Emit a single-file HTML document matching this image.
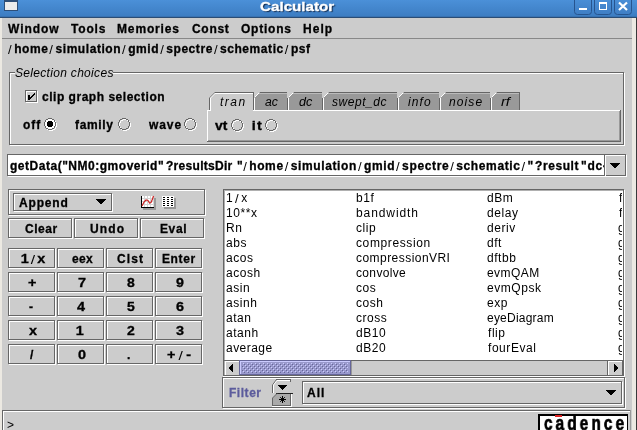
<!DOCTYPE html>
<html><head><meta charset="utf-8">
<style>
*{margin:0;padding:0;box-sizing:border-box}
html,body{width:637px;height:430px;overflow:hidden;background:#cccccc;position:relative;font-family:"Liberation Sans",sans-serif;font-size:12px;color:#000}
.a{position:absolute}
.t{position:absolute;white-space:nowrap;line-height:14px;will-change:transform}
.b{font-weight:bold}
.i{font-style:italic}
svg{position:absolute;left:0;top:0}
</style></head><body>
<svg width="637" height="430" viewBox="0 0 637 430" shape-rendering="crispEdges">
<defs><linearGradient id="tb" x1="0" y1="0" x2="0" y2="1"><stop offset="0" stop-color="#4b90d8"/><stop offset="1" stop-color="#3b7bc0"/></linearGradient><linearGradient id="wb" x1="0" y1="0" x2="0" y2="1"><stop offset="0" stop-color="#4a8fd7"/><stop offset="1" stop-color="#3f7ec4"/></linearGradient><pattern id="bumps" x="0" y="0" width="4" height="4" patternUnits="userSpaceOnUse"><rect x="0" y="0" width="4" height="4" fill="#9999cc"/><rect x="1" y="1" width="1" height="1" fill="#ccccff"/><rect x="3" y="3" width="1" height="1" fill="#ccccff"/><rect x="2" y="2" width="1" height="1" fill="#666699"/><rect x="0" y="0" width="1" height="1" fill="#666699"/></pattern></defs>
<rect x="0" y="0" width="637" height="18" fill="url(#tb)"/>
<rect x="0" y="16" width="637" height="1" fill="#3872b2"/>
<rect x="0" y="17" width="637" height="1" fill="#2a4c74"/>
<rect x="4" y="0" width="14" height="11" fill="#2e4f78"/>
<rect x="5" y="2" width="12" height="8" fill="#ececec"/>
<path d="M574.5 -1 V11.5 Q574.5 14.5 577.5 14.5 H588.5 Q591.5 14.5 591.5 11.5 V-1" fill="url(#wb)" stroke="#27558f" stroke-width="1" shape-rendering="geometricPrecision"/>
<path d="M594.5 -1 V11.5 Q594.5 14.5 597.5 14.5 H608.5 Q611.5 14.5 611.5 11.5 V-1" fill="url(#wb)" stroke="#27558f" stroke-width="1" shape-rendering="geometricPrecision"/>
<path d="M614.5 -1 V11.5 Q614.5 14.5 617.5 14.5 H628.5 Q631.5 14.5 631.5 11.5 V-1" fill="url(#wb)" stroke="#27558f" stroke-width="1" shape-rendering="geometricPrecision"/>
<rect x="579" y="8" width="8" height="2" fill="#ffffff"/>
<rect x="599" y="2" width="8" height="1" fill="#ffffff"/>
<rect x="599" y="9" width="8" height="1" fill="#ffffff"/>
<rect x="599" y="2" width="1" height="8" fill="#ffffff"/>
<rect x="606" y="2" width="1" height="8" fill="#ffffff"/>
<rect x="599" y="3" width="8" height="1" fill="#ffffff"/>
<path d="M619 2.5 L627 10 M627 2.5 L619 10" stroke="#ffffff" stroke-width="2.2" fill="none" shape-rendering="geometricPrecision"/>
<rect x="0" y="18" width="2" height="412" fill="#ece9e2"/>
<rect x="632" y="18" width="4" height="412" fill="#ece9e2"/>
<rect x="636" y="18" width="1" height="412" fill="#3a3a3a"/>
<rect x="2" y="38" width="630" height="1" fill="#888888"/>
<rect x="10" y="73" width="615" height="1" fill="#ffffff"/>
<rect x="10" y="145" width="615" height="1" fill="#ffffff"/>
<rect x="10" y="73" width="1" height="73" fill="#ffffff"/>
<rect x="624" y="73" width="1" height="73" fill="#ffffff"/>
<rect x="9" y="72" width="615" height="1" fill="#666666"/>
<rect x="9" y="144" width="615" height="1" fill="#666666"/>
<rect x="9" y="72" width="1" height="73" fill="#666666"/>
<rect x="623" y="72" width="1" height="73" fill="#666666"/>
<rect x="15" y="66" width="98" height="10" fill="#cccccc"/>
<rect x="26" y="91" width="12" height="1" fill="#ffffff"/>
<rect x="26" y="102" width="12" height="1" fill="#ffffff"/>
<rect x="26" y="91" width="1" height="12" fill="#ffffff"/>
<rect x="37" y="91" width="1" height="12" fill="#ffffff"/>
<rect x="25" y="90" width="12" height="1" fill="#666666"/>
<rect x="25" y="101" width="12" height="1" fill="#666666"/>
<rect x="25" y="90" width="1" height="12" fill="#666666"/>
<rect x="36" y="90" width="1" height="12" fill="#666666"/>
<rect x="28" y="95" width="2" height="5" fill="#000"/>
<rect x="30" y="97" width="1" height="2" fill="#000"/>
<rect x="31" y="96" width="1" height="2" fill="#000"/>
<rect x="32" y="95" width="1" height="2" fill="#000"/>
<rect x="33" y="94" width="1" height="2" fill="#000"/>
<rect x="34" y="93" width="1" height="2" fill="#000"/>
<rect x="48" y="119" width="4" height="1" fill="#ffffff"/>
<rect x="46" y="120" width="8" height="1" fill="#ffffff"/>
<rect x="46" y="121" width="8" height="1" fill="#ffffff"/>
<rect x="45" y="122" width="10" height="1" fill="#ffffff"/>
<rect x="45" y="123" width="10" height="1" fill="#ffffff"/>
<rect x="45" y="124" width="10" height="1" fill="#ffffff"/>
<rect x="45" y="125" width="10" height="1" fill="#ffffff"/>
<rect x="46" y="126" width="8" height="1" fill="#ffffff"/>
<rect x="46" y="127" width="8" height="1" fill="#ffffff"/>
<rect x="48" y="128" width="4" height="1" fill="#ffffff"/>
<rect x="49" y="119" width="4" height="1" fill="#ffffff"/>
<rect x="47" y="120" width="2" height="1" fill="#ffffff"/>
<rect x="53" y="120" width="2" height="1" fill="#ffffff"/>
<rect x="46" y="121" width="1" height="1" fill="#ffffff"/>
<rect x="55" y="121" width="1" height="1" fill="#ffffff"/>
<rect x="46" y="122" width="1" height="1" fill="#ffffff"/>
<rect x="55" y="122" width="1" height="1" fill="#ffffff"/>
<rect x="45" y="123" width="1" height="1" fill="#ffffff"/>
<rect x="56" y="123" width="1" height="1" fill="#ffffff"/>
<rect x="45" y="124" width="1" height="1" fill="#ffffff"/>
<rect x="56" y="124" width="1" height="1" fill="#ffffff"/>
<rect x="45" y="125" width="1" height="1" fill="#ffffff"/>
<rect x="56" y="125" width="1" height="1" fill="#ffffff"/>
<rect x="45" y="126" width="1" height="1" fill="#ffffff"/>
<rect x="56" y="126" width="1" height="1" fill="#ffffff"/>
<rect x="46" y="127" width="1" height="1" fill="#ffffff"/>
<rect x="55" y="127" width="1" height="1" fill="#ffffff"/>
<rect x="46" y="128" width="1" height="1" fill="#ffffff"/>
<rect x="55" y="128" width="1" height="1" fill="#ffffff"/>
<rect x="47" y="129" width="2" height="1" fill="#ffffff"/>
<rect x="53" y="129" width="2" height="1" fill="#ffffff"/>
<rect x="49" y="130" width="4" height="1" fill="#ffffff"/>
<rect x="48" y="118" width="4" height="1" fill="#666666"/>
<rect x="46" y="119" width="2" height="1" fill="#666666"/>
<rect x="52" y="119" width="2" height="1" fill="#666666"/>
<rect x="45" y="120" width="1" height="1" fill="#666666"/>
<rect x="54" y="120" width="1" height="1" fill="#666666"/>
<rect x="45" y="121" width="1" height="1" fill="#666666"/>
<rect x="54" y="121" width="1" height="1" fill="#666666"/>
<rect x="44" y="122" width="1" height="1" fill="#666666"/>
<rect x="55" y="122" width="1" height="1" fill="#666666"/>
<rect x="44" y="123" width="1" height="1" fill="#666666"/>
<rect x="55" y="123" width="1" height="1" fill="#666666"/>
<rect x="44" y="124" width="1" height="1" fill="#666666"/>
<rect x="55" y="124" width="1" height="1" fill="#666666"/>
<rect x="44" y="125" width="1" height="1" fill="#666666"/>
<rect x="55" y="125" width="1" height="1" fill="#666666"/>
<rect x="45" y="126" width="1" height="1" fill="#666666"/>
<rect x="54" y="126" width="1" height="1" fill="#666666"/>
<rect x="45" y="127" width="1" height="1" fill="#666666"/>
<rect x="54" y="127" width="1" height="1" fill="#666666"/>
<rect x="46" y="128" width="2" height="1" fill="#666666"/>
<rect x="52" y="128" width="2" height="1" fill="#666666"/>
<rect x="48" y="129" width="4" height="1" fill="#666666"/>
<rect x="48" y="121" width="4" height="1" fill="#000"/>
<rect x="47" y="122" width="6" height="4" fill="#000"/>
<rect x="48" y="126" width="4" height="1" fill="#000"/>
<rect x="123" y="119" width="4" height="1" fill="#ffffff"/>
<rect x="121" y="120" width="2" height="1" fill="#ffffff"/>
<rect x="127" y="120" width="2" height="1" fill="#ffffff"/>
<rect x="120" y="121" width="1" height="1" fill="#ffffff"/>
<rect x="129" y="121" width="1" height="1" fill="#ffffff"/>
<rect x="120" y="122" width="1" height="1" fill="#ffffff"/>
<rect x="129" y="122" width="1" height="1" fill="#ffffff"/>
<rect x="119" y="123" width="1" height="1" fill="#ffffff"/>
<rect x="130" y="123" width="1" height="1" fill="#ffffff"/>
<rect x="119" y="124" width="1" height="1" fill="#ffffff"/>
<rect x="130" y="124" width="1" height="1" fill="#ffffff"/>
<rect x="119" y="125" width="1" height="1" fill="#ffffff"/>
<rect x="130" y="125" width="1" height="1" fill="#ffffff"/>
<rect x="119" y="126" width="1" height="1" fill="#ffffff"/>
<rect x="130" y="126" width="1" height="1" fill="#ffffff"/>
<rect x="120" y="127" width="1" height="1" fill="#ffffff"/>
<rect x="129" y="127" width="1" height="1" fill="#ffffff"/>
<rect x="120" y="128" width="1" height="1" fill="#ffffff"/>
<rect x="129" y="128" width="1" height="1" fill="#ffffff"/>
<rect x="121" y="129" width="2" height="1" fill="#ffffff"/>
<rect x="127" y="129" width="2" height="1" fill="#ffffff"/>
<rect x="123" y="130" width="4" height="1" fill="#ffffff"/>
<rect x="122" y="118" width="4" height="1" fill="#666666"/>
<rect x="120" y="119" width="2" height="1" fill="#666666"/>
<rect x="126" y="119" width="2" height="1" fill="#666666"/>
<rect x="119" y="120" width="1" height="1" fill="#666666"/>
<rect x="128" y="120" width="1" height="1" fill="#666666"/>
<rect x="119" y="121" width="1" height="1" fill="#666666"/>
<rect x="128" y="121" width="1" height="1" fill="#666666"/>
<rect x="118" y="122" width="1" height="1" fill="#666666"/>
<rect x="129" y="122" width="1" height="1" fill="#666666"/>
<rect x="118" y="123" width="1" height="1" fill="#666666"/>
<rect x="129" y="123" width="1" height="1" fill="#666666"/>
<rect x="118" y="124" width="1" height="1" fill="#666666"/>
<rect x="129" y="124" width="1" height="1" fill="#666666"/>
<rect x="118" y="125" width="1" height="1" fill="#666666"/>
<rect x="129" y="125" width="1" height="1" fill="#666666"/>
<rect x="119" y="126" width="1" height="1" fill="#666666"/>
<rect x="128" y="126" width="1" height="1" fill="#666666"/>
<rect x="119" y="127" width="1" height="1" fill="#666666"/>
<rect x="128" y="127" width="1" height="1" fill="#666666"/>
<rect x="120" y="128" width="2" height="1" fill="#666666"/>
<rect x="126" y="128" width="2" height="1" fill="#666666"/>
<rect x="122" y="129" width="4" height="1" fill="#666666"/>
<rect x="189" y="119" width="4" height="1" fill="#ffffff"/>
<rect x="187" y="120" width="2" height="1" fill="#ffffff"/>
<rect x="193" y="120" width="2" height="1" fill="#ffffff"/>
<rect x="186" y="121" width="1" height="1" fill="#ffffff"/>
<rect x="195" y="121" width="1" height="1" fill="#ffffff"/>
<rect x="186" y="122" width="1" height="1" fill="#ffffff"/>
<rect x="195" y="122" width="1" height="1" fill="#ffffff"/>
<rect x="185" y="123" width="1" height="1" fill="#ffffff"/>
<rect x="196" y="123" width="1" height="1" fill="#ffffff"/>
<rect x="185" y="124" width="1" height="1" fill="#ffffff"/>
<rect x="196" y="124" width="1" height="1" fill="#ffffff"/>
<rect x="185" y="125" width="1" height="1" fill="#ffffff"/>
<rect x="196" y="125" width="1" height="1" fill="#ffffff"/>
<rect x="185" y="126" width="1" height="1" fill="#ffffff"/>
<rect x="196" y="126" width="1" height="1" fill="#ffffff"/>
<rect x="186" y="127" width="1" height="1" fill="#ffffff"/>
<rect x="195" y="127" width="1" height="1" fill="#ffffff"/>
<rect x="186" y="128" width="1" height="1" fill="#ffffff"/>
<rect x="195" y="128" width="1" height="1" fill="#ffffff"/>
<rect x="187" y="129" width="2" height="1" fill="#ffffff"/>
<rect x="193" y="129" width="2" height="1" fill="#ffffff"/>
<rect x="189" y="130" width="4" height="1" fill="#ffffff"/>
<rect x="188" y="118" width="4" height="1" fill="#666666"/>
<rect x="186" y="119" width="2" height="1" fill="#666666"/>
<rect x="192" y="119" width="2" height="1" fill="#666666"/>
<rect x="185" y="120" width="1" height="1" fill="#666666"/>
<rect x="194" y="120" width="1" height="1" fill="#666666"/>
<rect x="185" y="121" width="1" height="1" fill="#666666"/>
<rect x="194" y="121" width="1" height="1" fill="#666666"/>
<rect x="184" y="122" width="1" height="1" fill="#666666"/>
<rect x="195" y="122" width="1" height="1" fill="#666666"/>
<rect x="184" y="123" width="1" height="1" fill="#666666"/>
<rect x="195" y="123" width="1" height="1" fill="#666666"/>
<rect x="184" y="124" width="1" height="1" fill="#666666"/>
<rect x="195" y="124" width="1" height="1" fill="#666666"/>
<rect x="184" y="125" width="1" height="1" fill="#666666"/>
<rect x="195" y="125" width="1" height="1" fill="#666666"/>
<rect x="185" y="126" width="1" height="1" fill="#666666"/>
<rect x="194" y="126" width="1" height="1" fill="#666666"/>
<rect x="185" y="127" width="1" height="1" fill="#666666"/>
<rect x="194" y="127" width="1" height="1" fill="#666666"/>
<rect x="186" y="128" width="2" height="1" fill="#666666"/>
<rect x="192" y="128" width="2" height="1" fill="#666666"/>
<rect x="188" y="129" width="4" height="1" fill="#666666"/>
<rect x="207" y="110" width="414" height="31" fill="#cccccc"/>
<rect x="207" y="110" width="414" height="1" fill="#ffffff"/>
<rect x="207" y="110" width="1" height="32" fill="#ffffff"/>
<rect x="207" y="141" width="414" height="1" fill="#666666"/>
<rect x="208" y="140" width="412" height="1" fill="#999999"/>
<rect x="620" y="110" width="1" height="32" fill="#666666"/>
<rect x="619" y="111" width="1" height="30" fill="#999999"/>
<rect x="254" y="93" width="33" height="17" fill="#999999"/>
<polygon points="253,92 259,92 253,98" fill="#cccccc"/>
<rect x="259" y="92" width="29" height="1" fill="#666666"/>
<rect x="259" y="93" width="28" height="1" fill="#bbbbbb"/>
<rect x="287" y="92" width="1" height="18" fill="#666666"/>
<rect x="254" y="98" width="1" height="12" fill="#ffffff"/>
<path d="M254.5 97.5 L259.5 92.5" stroke="#ffffff" stroke-width="1" fill="none" shape-rendering="geometricPrecision"/>
<rect x="288" y="93" width="34" height="17" fill="#999999"/>
<polygon points="287,92 293,92 287,98" fill="#cccccc"/>
<rect x="293" y="92" width="30" height="1" fill="#666666"/>
<rect x="293" y="93" width="29" height="1" fill="#bbbbbb"/>
<rect x="322" y="92" width="1" height="18" fill="#666666"/>
<rect x="288" y="98" width="1" height="12" fill="#ffffff"/>
<path d="M288.5 97.5 L293.5 92.5" stroke="#ffffff" stroke-width="1" fill="none" shape-rendering="geometricPrecision"/>
<rect x="323" y="93" width="74" height="17" fill="#999999"/>
<polygon points="322,92 328,92 322,98" fill="#cccccc"/>
<rect x="328" y="92" width="70" height="1" fill="#666666"/>
<rect x="328" y="93" width="69" height="1" fill="#bbbbbb"/>
<rect x="397" y="92" width="1" height="18" fill="#666666"/>
<rect x="323" y="98" width="1" height="12" fill="#ffffff"/>
<path d="M323.5 97.5 L328.5 92.5" stroke="#ffffff" stroke-width="1" fill="none" shape-rendering="geometricPrecision"/>
<rect x="398" y="93" width="41" height="17" fill="#999999"/>
<polygon points="397,92 403,92 397,98" fill="#cccccc"/>
<rect x="403" y="92" width="37" height="1" fill="#666666"/>
<rect x="403" y="93" width="36" height="1" fill="#bbbbbb"/>
<rect x="439" y="92" width="1" height="18" fill="#666666"/>
<rect x="398" y="98" width="1" height="12" fill="#ffffff"/>
<path d="M398.5 97.5 L403.5 92.5" stroke="#ffffff" stroke-width="1" fill="none" shape-rendering="geometricPrecision"/>
<rect x="440" y="93" width="50" height="17" fill="#999999"/>
<polygon points="439,92 445,92 439,98" fill="#cccccc"/>
<rect x="445" y="92" width="46" height="1" fill="#666666"/>
<rect x="445" y="93" width="45" height="1" fill="#bbbbbb"/>
<rect x="490" y="92" width="1" height="18" fill="#666666"/>
<rect x="440" y="98" width="1" height="12" fill="#ffffff"/>
<path d="M440.5 97.5 L445.5 92.5" stroke="#ffffff" stroke-width="1" fill="none" shape-rendering="geometricPrecision"/>
<rect x="491" y="93" width="28" height="17" fill="#999999"/>
<polygon points="490,92 496,92 490,98" fill="#cccccc"/>
<rect x="496" y="92" width="24" height="1" fill="#666666"/>
<rect x="496" y="93" width="23" height="1" fill="#bbbbbb"/>
<rect x="519" y="92" width="1" height="18" fill="#666666"/>
<rect x="491" y="98" width="1" height="12" fill="#ffffff"/>
<path d="M491.5 97.5 L496.5 92.5" stroke="#ffffff" stroke-width="1" fill="none" shape-rendering="geometricPrecision"/>
<rect x="210" y="93" width="43" height="18" fill="#cccccc"/>
<polygon points="209,92 215,92 209,98" fill="#cccccc"/>
<rect x="215" y="92" width="39" height="1" fill="#666666"/>
<rect x="215" y="93" width="38" height="1" fill="#ffffff"/>
<rect x="209" y="98" width="1" height="13" fill="#666666"/>
<rect x="210" y="98" width="1" height="13" fill="#ffffff"/>
<rect x="253" y="92" width="1" height="18" fill="#666666"/>
<path d="M209.5 98 L215.5 92" stroke="#666666" stroke-width="1" fill="none" shape-rendering="geometricPrecision"/>
<path d="M210.5 98 L215.5 93" stroke="#ffffff" stroke-width="1" fill="none" shape-rendering="geometricPrecision"/>
<rect x="207" y="110" width="4" height="1" fill="#ffffff"/>
<rect x="236" y="120" width="4" height="1" fill="#ffffff"/>
<rect x="234" y="121" width="2" height="1" fill="#ffffff"/>
<rect x="240" y="121" width="2" height="1" fill="#ffffff"/>
<rect x="233" y="122" width="1" height="1" fill="#ffffff"/>
<rect x="242" y="122" width="1" height="1" fill="#ffffff"/>
<rect x="233" y="123" width="1" height="1" fill="#ffffff"/>
<rect x="242" y="123" width="1" height="1" fill="#ffffff"/>
<rect x="232" y="124" width="1" height="1" fill="#ffffff"/>
<rect x="243" y="124" width="1" height="1" fill="#ffffff"/>
<rect x="232" y="125" width="1" height="1" fill="#ffffff"/>
<rect x="243" y="125" width="1" height="1" fill="#ffffff"/>
<rect x="232" y="126" width="1" height="1" fill="#ffffff"/>
<rect x="243" y="126" width="1" height="1" fill="#ffffff"/>
<rect x="232" y="127" width="1" height="1" fill="#ffffff"/>
<rect x="243" y="127" width="1" height="1" fill="#ffffff"/>
<rect x="233" y="128" width="1" height="1" fill="#ffffff"/>
<rect x="242" y="128" width="1" height="1" fill="#ffffff"/>
<rect x="233" y="129" width="1" height="1" fill="#ffffff"/>
<rect x="242" y="129" width="1" height="1" fill="#ffffff"/>
<rect x="234" y="130" width="2" height="1" fill="#ffffff"/>
<rect x="240" y="130" width="2" height="1" fill="#ffffff"/>
<rect x="236" y="131" width="4" height="1" fill="#ffffff"/>
<rect x="235" y="119" width="4" height="1" fill="#666666"/>
<rect x="233" y="120" width="2" height="1" fill="#666666"/>
<rect x="239" y="120" width="2" height="1" fill="#666666"/>
<rect x="232" y="121" width="1" height="1" fill="#666666"/>
<rect x="241" y="121" width="1" height="1" fill="#666666"/>
<rect x="232" y="122" width="1" height="1" fill="#666666"/>
<rect x="241" y="122" width="1" height="1" fill="#666666"/>
<rect x="231" y="123" width="1" height="1" fill="#666666"/>
<rect x="242" y="123" width="1" height="1" fill="#666666"/>
<rect x="231" y="124" width="1" height="1" fill="#666666"/>
<rect x="242" y="124" width="1" height="1" fill="#666666"/>
<rect x="231" y="125" width="1" height="1" fill="#666666"/>
<rect x="242" y="125" width="1" height="1" fill="#666666"/>
<rect x="231" y="126" width="1" height="1" fill="#666666"/>
<rect x="242" y="126" width="1" height="1" fill="#666666"/>
<rect x="232" y="127" width="1" height="1" fill="#666666"/>
<rect x="241" y="127" width="1" height="1" fill="#666666"/>
<rect x="232" y="128" width="1" height="1" fill="#666666"/>
<rect x="241" y="128" width="1" height="1" fill="#666666"/>
<rect x="233" y="129" width="2" height="1" fill="#666666"/>
<rect x="239" y="129" width="2" height="1" fill="#666666"/>
<rect x="235" y="130" width="4" height="1" fill="#666666"/>
<rect x="270" y="120" width="4" height="1" fill="#ffffff"/>
<rect x="268" y="121" width="2" height="1" fill="#ffffff"/>
<rect x="274" y="121" width="2" height="1" fill="#ffffff"/>
<rect x="267" y="122" width="1" height="1" fill="#ffffff"/>
<rect x="276" y="122" width="1" height="1" fill="#ffffff"/>
<rect x="267" y="123" width="1" height="1" fill="#ffffff"/>
<rect x="276" y="123" width="1" height="1" fill="#ffffff"/>
<rect x="266" y="124" width="1" height="1" fill="#ffffff"/>
<rect x="277" y="124" width="1" height="1" fill="#ffffff"/>
<rect x="266" y="125" width="1" height="1" fill="#ffffff"/>
<rect x="277" y="125" width="1" height="1" fill="#ffffff"/>
<rect x="266" y="126" width="1" height="1" fill="#ffffff"/>
<rect x="277" y="126" width="1" height="1" fill="#ffffff"/>
<rect x="266" y="127" width="1" height="1" fill="#ffffff"/>
<rect x="277" y="127" width="1" height="1" fill="#ffffff"/>
<rect x="267" y="128" width="1" height="1" fill="#ffffff"/>
<rect x="276" y="128" width="1" height="1" fill="#ffffff"/>
<rect x="267" y="129" width="1" height="1" fill="#ffffff"/>
<rect x="276" y="129" width="1" height="1" fill="#ffffff"/>
<rect x="268" y="130" width="2" height="1" fill="#ffffff"/>
<rect x="274" y="130" width="2" height="1" fill="#ffffff"/>
<rect x="270" y="131" width="4" height="1" fill="#ffffff"/>
<rect x="269" y="119" width="4" height="1" fill="#666666"/>
<rect x="267" y="120" width="2" height="1" fill="#666666"/>
<rect x="273" y="120" width="2" height="1" fill="#666666"/>
<rect x="266" y="121" width="1" height="1" fill="#666666"/>
<rect x="275" y="121" width="1" height="1" fill="#666666"/>
<rect x="266" y="122" width="1" height="1" fill="#666666"/>
<rect x="275" y="122" width="1" height="1" fill="#666666"/>
<rect x="265" y="123" width="1" height="1" fill="#666666"/>
<rect x="276" y="123" width="1" height="1" fill="#666666"/>
<rect x="265" y="124" width="1" height="1" fill="#666666"/>
<rect x="276" y="124" width="1" height="1" fill="#666666"/>
<rect x="265" y="125" width="1" height="1" fill="#666666"/>
<rect x="276" y="125" width="1" height="1" fill="#666666"/>
<rect x="265" y="126" width="1" height="1" fill="#666666"/>
<rect x="276" y="126" width="1" height="1" fill="#666666"/>
<rect x="266" y="127" width="1" height="1" fill="#666666"/>
<rect x="275" y="127" width="1" height="1" fill="#666666"/>
<rect x="266" y="128" width="1" height="1" fill="#666666"/>
<rect x="275" y="128" width="1" height="1" fill="#666666"/>
<rect x="267" y="129" width="2" height="1" fill="#666666"/>
<rect x="273" y="129" width="2" height="1" fill="#666666"/>
<rect x="269" y="130" width="4" height="1" fill="#666666"/>
<rect x="8" y="155" width="619" height="1" fill="#ffffff"/>
<rect x="8" y="176" width="619" height="1" fill="#ffffff"/>
<rect x="8" y="155" width="1" height="22" fill="#ffffff"/>
<rect x="626" y="155" width="1" height="22" fill="#ffffff"/>
<rect x="7" y="154" width="619" height="1" fill="#666666"/>
<rect x="7" y="175" width="619" height="1" fill="#666666"/>
<rect x="7" y="154" width="1" height="22" fill="#666666"/>
<rect x="625" y="154" width="1" height="22" fill="#666666"/>
<rect x="8" y="155" width="596" height="20" fill="#ffffff"/>
<rect x="604" y="155" width="1" height="20" fill="#666666"/>
<rect x="605" y="155" width="1" height="21" fill="#ffffff"/>
<rect x="606" y="155" width="19" height="1" fill="#ffffff"/>
<polygon points="609,163 620,163 614.5,168.5" fill="#000"/>
<rect x="9" y="190" width="197" height="1" fill="#ffffff"/>
<rect x="9" y="215" width="197" height="1" fill="#ffffff"/>
<rect x="9" y="190" width="1" height="26" fill="#ffffff"/>
<rect x="205" y="190" width="1" height="26" fill="#ffffff"/>
<rect x="8" y="189" width="197" height="1" fill="#666666"/>
<rect x="8" y="214" width="197" height="1" fill="#666666"/>
<rect x="8" y="189" width="1" height="26" fill="#666666"/>
<rect x="204" y="189" width="1" height="26" fill="#666666"/>
<rect x="14" y="194" width="99" height="1" fill="#ffffff"/>
<rect x="14" y="211" width="99" height="1" fill="#ffffff"/>
<rect x="14" y="194" width="1" height="18" fill="#ffffff"/>
<rect x="112" y="194" width="1" height="18" fill="#ffffff"/>
<rect x="13" y="193" width="99" height="1" fill="#666666"/>
<rect x="13" y="210" width="99" height="1" fill="#666666"/>
<rect x="13" y="193" width="1" height="18" fill="#666666"/>
<rect x="111" y="193" width="1" height="18" fill="#666666"/>
<polygon points="96,199 106,199 101,204.5" fill="#000"/>
<rect x="143" y="198" width="13" height="12" fill="#999999"/>
<rect x="141" y="196" width="13" height="12" fill="#d4d4d4"/>
<rect x="142" y="196" width="2" height="2" fill="#ffffff"/>
<rect x="142" y="199" width="2" height="2" fill="#ffffff"/>
<rect x="142" y="202" width="2" height="2" fill="#ffffff"/>
<rect x="142" y="205" width="2" height="2" fill="#ffffff"/>
<rect x="145" y="196" width="2" height="2" fill="#ffffff"/>
<rect x="145" y="199" width="2" height="2" fill="#ffffff"/>
<rect x="145" y="202" width="2" height="2" fill="#ffffff"/>
<rect x="145" y="205" width="2" height="2" fill="#ffffff"/>
<rect x="148" y="196" width="2" height="2" fill="#ffffff"/>
<rect x="148" y="199" width="2" height="2" fill="#ffffff"/>
<rect x="148" y="202" width="2" height="2" fill="#ffffff"/>
<rect x="148" y="205" width="2" height="2" fill="#ffffff"/>
<rect x="151" y="196" width="2" height="2" fill="#ffffff"/>
<rect x="151" y="199" width="2" height="2" fill="#ffffff"/>
<rect x="151" y="202" width="2" height="2" fill="#ffffff"/>
<rect x="151" y="205" width="2" height="2" fill="#ffffff"/>
<rect x="141" y="196" width="1" height="12" fill="#000"/>
<rect x="141" y="207" width="13" height="1" fill="#000"/>
<path d="M142 206 L144 202 L146 200 L148 200.5 L149.5 203 L151 202.5 L152.5 199 L153.5 196" stroke="#cc2020" stroke-width="1.2" fill="none" shape-rendering="geometricPrecision"/>
<rect x="164" y="198" width="12" height="11" fill="#999999"/>
<rect x="162" y="196" width="12" height="11" fill="#ffffff"/>
<rect x="163" y="197" width="2" height="1" fill="#000"/>
<rect x="163" y="199" width="2" height="1" fill="#000"/>
<rect x="163" y="201" width="2" height="1" fill="#000"/>
<rect x="163" y="203" width="2" height="1" fill="#000"/>
<rect x="163" y="205" width="2" height="1" fill="#000"/>
<rect x="167" y="197" width="2" height="1" fill="#000"/>
<rect x="167" y="199" width="2" height="1" fill="#000"/>
<rect x="167" y="201" width="2" height="1" fill="#000"/>
<rect x="167" y="203" width="2" height="1" fill="#000"/>
<rect x="167" y="205" width="2" height="1" fill="#000"/>
<rect x="171" y="197" width="2" height="1" fill="#000"/>
<rect x="171" y="199" width="2" height="1" fill="#000"/>
<rect x="171" y="201" width="2" height="1" fill="#000"/>
<rect x="171" y="203" width="2" height="1" fill="#000"/>
<rect x="171" y="205" width="2" height="1" fill="#000"/>
<rect x="9" y="219" width="64" height="1" fill="#ffffff"/>
<rect x="9" y="238" width="64" height="1" fill="#ffffff"/>
<rect x="9" y="219" width="1" height="20" fill="#ffffff"/>
<rect x="72" y="219" width="1" height="20" fill="#ffffff"/>
<rect x="8" y="218" width="64" height="1" fill="#666666"/>
<rect x="8" y="237" width="64" height="1" fill="#666666"/>
<rect x="8" y="218" width="1" height="20" fill="#666666"/>
<rect x="71" y="218" width="1" height="20" fill="#666666"/>
<rect x="75" y="219" width="64" height="1" fill="#ffffff"/>
<rect x="75" y="238" width="64" height="1" fill="#ffffff"/>
<rect x="75" y="219" width="1" height="20" fill="#ffffff"/>
<rect x="138" y="219" width="1" height="20" fill="#ffffff"/>
<rect x="74" y="218" width="64" height="1" fill="#666666"/>
<rect x="74" y="237" width="64" height="1" fill="#666666"/>
<rect x="74" y="218" width="1" height="20" fill="#666666"/>
<rect x="137" y="218" width="1" height="20" fill="#666666"/>
<rect x="141" y="219" width="64" height="1" fill="#ffffff"/>
<rect x="141" y="238" width="64" height="1" fill="#ffffff"/>
<rect x="141" y="219" width="1" height="20" fill="#ffffff"/>
<rect x="204" y="219" width="1" height="20" fill="#ffffff"/>
<rect x="140" y="218" width="64" height="1" fill="#666666"/>
<rect x="140" y="237" width="64" height="1" fill="#666666"/>
<rect x="140" y="218" width="1" height="20" fill="#666666"/>
<rect x="203" y="218" width="1" height="20" fill="#666666"/>
<rect x="9" y="249" width="47" height="1" fill="#ffffff"/>
<rect x="9" y="268" width="47" height="1" fill="#ffffff"/>
<rect x="9" y="249" width="1" height="20" fill="#ffffff"/>
<rect x="55" y="249" width="1" height="20" fill="#ffffff"/>
<rect x="8" y="248" width="47" height="1" fill="#666666"/>
<rect x="8" y="267" width="47" height="1" fill="#666666"/>
<rect x="8" y="248" width="1" height="20" fill="#666666"/>
<rect x="54" y="248" width="1" height="20" fill="#666666"/>
<rect x="58" y="249" width="47" height="1" fill="#ffffff"/>
<rect x="58" y="268" width="47" height="1" fill="#ffffff"/>
<rect x="58" y="249" width="1" height="20" fill="#ffffff"/>
<rect x="104" y="249" width="1" height="20" fill="#ffffff"/>
<rect x="57" y="248" width="47" height="1" fill="#666666"/>
<rect x="57" y="267" width="47" height="1" fill="#666666"/>
<rect x="57" y="248" width="1" height="20" fill="#666666"/>
<rect x="103" y="248" width="1" height="20" fill="#666666"/>
<rect x="107" y="249" width="47" height="1" fill="#ffffff"/>
<rect x="107" y="268" width="47" height="1" fill="#ffffff"/>
<rect x="107" y="249" width="1" height="20" fill="#ffffff"/>
<rect x="153" y="249" width="1" height="20" fill="#ffffff"/>
<rect x="106" y="248" width="47" height="1" fill="#666666"/>
<rect x="106" y="267" width="47" height="1" fill="#666666"/>
<rect x="106" y="248" width="1" height="20" fill="#666666"/>
<rect x="152" y="248" width="1" height="20" fill="#666666"/>
<rect x="156" y="249" width="47" height="1" fill="#ffffff"/>
<rect x="156" y="268" width="47" height="1" fill="#ffffff"/>
<rect x="156" y="249" width="1" height="20" fill="#ffffff"/>
<rect x="202" y="249" width="1" height="20" fill="#ffffff"/>
<rect x="155" y="248" width="47" height="1" fill="#666666"/>
<rect x="155" y="267" width="47" height="1" fill="#666666"/>
<rect x="155" y="248" width="1" height="20" fill="#666666"/>
<rect x="201" y="248" width="1" height="20" fill="#666666"/>
<rect x="9" y="273" width="47" height="1" fill="#ffffff"/>
<rect x="9" y="292" width="47" height="1" fill="#ffffff"/>
<rect x="9" y="273" width="1" height="20" fill="#ffffff"/>
<rect x="55" y="273" width="1" height="20" fill="#ffffff"/>
<rect x="8" y="272" width="47" height="1" fill="#666666"/>
<rect x="8" y="291" width="47" height="1" fill="#666666"/>
<rect x="8" y="272" width="1" height="20" fill="#666666"/>
<rect x="54" y="272" width="1" height="20" fill="#666666"/>
<rect x="58" y="273" width="47" height="1" fill="#ffffff"/>
<rect x="58" y="292" width="47" height="1" fill="#ffffff"/>
<rect x="58" y="273" width="1" height="20" fill="#ffffff"/>
<rect x="104" y="273" width="1" height="20" fill="#ffffff"/>
<rect x="57" y="272" width="47" height="1" fill="#666666"/>
<rect x="57" y="291" width="47" height="1" fill="#666666"/>
<rect x="57" y="272" width="1" height="20" fill="#666666"/>
<rect x="103" y="272" width="1" height="20" fill="#666666"/>
<rect x="107" y="273" width="47" height="1" fill="#ffffff"/>
<rect x="107" y="292" width="47" height="1" fill="#ffffff"/>
<rect x="107" y="273" width="1" height="20" fill="#ffffff"/>
<rect x="153" y="273" width="1" height="20" fill="#ffffff"/>
<rect x="106" y="272" width="47" height="1" fill="#666666"/>
<rect x="106" y="291" width="47" height="1" fill="#666666"/>
<rect x="106" y="272" width="1" height="20" fill="#666666"/>
<rect x="152" y="272" width="1" height="20" fill="#666666"/>
<rect x="156" y="273" width="47" height="1" fill="#ffffff"/>
<rect x="156" y="292" width="47" height="1" fill="#ffffff"/>
<rect x="156" y="273" width="1" height="20" fill="#ffffff"/>
<rect x="202" y="273" width="1" height="20" fill="#ffffff"/>
<rect x="155" y="272" width="47" height="1" fill="#666666"/>
<rect x="155" y="291" width="47" height="1" fill="#666666"/>
<rect x="155" y="272" width="1" height="20" fill="#666666"/>
<rect x="201" y="272" width="1" height="20" fill="#666666"/>
<rect x="9" y="297" width="47" height="1" fill="#ffffff"/>
<rect x="9" y="316" width="47" height="1" fill="#ffffff"/>
<rect x="9" y="297" width="1" height="20" fill="#ffffff"/>
<rect x="55" y="297" width="1" height="20" fill="#ffffff"/>
<rect x="8" y="296" width="47" height="1" fill="#666666"/>
<rect x="8" y="315" width="47" height="1" fill="#666666"/>
<rect x="8" y="296" width="1" height="20" fill="#666666"/>
<rect x="54" y="296" width="1" height="20" fill="#666666"/>
<rect x="58" y="297" width="47" height="1" fill="#ffffff"/>
<rect x="58" y="316" width="47" height="1" fill="#ffffff"/>
<rect x="58" y="297" width="1" height="20" fill="#ffffff"/>
<rect x="104" y="297" width="1" height="20" fill="#ffffff"/>
<rect x="57" y="296" width="47" height="1" fill="#666666"/>
<rect x="57" y="315" width="47" height="1" fill="#666666"/>
<rect x="57" y="296" width="1" height="20" fill="#666666"/>
<rect x="103" y="296" width="1" height="20" fill="#666666"/>
<rect x="107" y="297" width="47" height="1" fill="#ffffff"/>
<rect x="107" y="316" width="47" height="1" fill="#ffffff"/>
<rect x="107" y="297" width="1" height="20" fill="#ffffff"/>
<rect x="153" y="297" width="1" height="20" fill="#ffffff"/>
<rect x="106" y="296" width="47" height="1" fill="#666666"/>
<rect x="106" y="315" width="47" height="1" fill="#666666"/>
<rect x="106" y="296" width="1" height="20" fill="#666666"/>
<rect x="152" y="296" width="1" height="20" fill="#666666"/>
<rect x="156" y="297" width="47" height="1" fill="#ffffff"/>
<rect x="156" y="316" width="47" height="1" fill="#ffffff"/>
<rect x="156" y="297" width="1" height="20" fill="#ffffff"/>
<rect x="202" y="297" width="1" height="20" fill="#ffffff"/>
<rect x="155" y="296" width="47" height="1" fill="#666666"/>
<rect x="155" y="315" width="47" height="1" fill="#666666"/>
<rect x="155" y="296" width="1" height="20" fill="#666666"/>
<rect x="201" y="296" width="1" height="20" fill="#666666"/>
<rect x="9" y="321" width="47" height="1" fill="#ffffff"/>
<rect x="9" y="340" width="47" height="1" fill="#ffffff"/>
<rect x="9" y="321" width="1" height="20" fill="#ffffff"/>
<rect x="55" y="321" width="1" height="20" fill="#ffffff"/>
<rect x="8" y="320" width="47" height="1" fill="#666666"/>
<rect x="8" y="339" width="47" height="1" fill="#666666"/>
<rect x="8" y="320" width="1" height="20" fill="#666666"/>
<rect x="54" y="320" width="1" height="20" fill="#666666"/>
<rect x="58" y="321" width="47" height="1" fill="#ffffff"/>
<rect x="58" y="340" width="47" height="1" fill="#ffffff"/>
<rect x="58" y="321" width="1" height="20" fill="#ffffff"/>
<rect x="104" y="321" width="1" height="20" fill="#ffffff"/>
<rect x="57" y="320" width="47" height="1" fill="#666666"/>
<rect x="57" y="339" width="47" height="1" fill="#666666"/>
<rect x="57" y="320" width="1" height="20" fill="#666666"/>
<rect x="103" y="320" width="1" height="20" fill="#666666"/>
<rect x="107" y="321" width="47" height="1" fill="#ffffff"/>
<rect x="107" y="340" width="47" height="1" fill="#ffffff"/>
<rect x="107" y="321" width="1" height="20" fill="#ffffff"/>
<rect x="153" y="321" width="1" height="20" fill="#ffffff"/>
<rect x="106" y="320" width="47" height="1" fill="#666666"/>
<rect x="106" y="339" width="47" height="1" fill="#666666"/>
<rect x="106" y="320" width="1" height="20" fill="#666666"/>
<rect x="152" y="320" width="1" height="20" fill="#666666"/>
<rect x="156" y="321" width="47" height="1" fill="#ffffff"/>
<rect x="156" y="340" width="47" height="1" fill="#ffffff"/>
<rect x="156" y="321" width="1" height="20" fill="#ffffff"/>
<rect x="202" y="321" width="1" height="20" fill="#ffffff"/>
<rect x="155" y="320" width="47" height="1" fill="#666666"/>
<rect x="155" y="339" width="47" height="1" fill="#666666"/>
<rect x="155" y="320" width="1" height="20" fill="#666666"/>
<rect x="201" y="320" width="1" height="20" fill="#666666"/>
<rect x="9" y="345" width="47" height="1" fill="#ffffff"/>
<rect x="9" y="364" width="47" height="1" fill="#ffffff"/>
<rect x="9" y="345" width="1" height="20" fill="#ffffff"/>
<rect x="55" y="345" width="1" height="20" fill="#ffffff"/>
<rect x="8" y="344" width="47" height="1" fill="#666666"/>
<rect x="8" y="363" width="47" height="1" fill="#666666"/>
<rect x="8" y="344" width="1" height="20" fill="#666666"/>
<rect x="54" y="344" width="1" height="20" fill="#666666"/>
<rect x="58" y="345" width="47" height="1" fill="#ffffff"/>
<rect x="58" y="364" width="47" height="1" fill="#ffffff"/>
<rect x="58" y="345" width="1" height="20" fill="#ffffff"/>
<rect x="104" y="345" width="1" height="20" fill="#ffffff"/>
<rect x="57" y="344" width="47" height="1" fill="#666666"/>
<rect x="57" y="363" width="47" height="1" fill="#666666"/>
<rect x="57" y="344" width="1" height="20" fill="#666666"/>
<rect x="103" y="344" width="1" height="20" fill="#666666"/>
<rect x="107" y="345" width="47" height="1" fill="#ffffff"/>
<rect x="107" y="364" width="47" height="1" fill="#ffffff"/>
<rect x="107" y="345" width="1" height="20" fill="#ffffff"/>
<rect x="153" y="345" width="1" height="20" fill="#ffffff"/>
<rect x="106" y="344" width="47" height="1" fill="#666666"/>
<rect x="106" y="363" width="47" height="1" fill="#666666"/>
<rect x="106" y="344" width="1" height="20" fill="#666666"/>
<rect x="152" y="344" width="1" height="20" fill="#666666"/>
<rect x="156" y="345" width="47" height="1" fill="#ffffff"/>
<rect x="156" y="364" width="47" height="1" fill="#ffffff"/>
<rect x="156" y="345" width="1" height="20" fill="#ffffff"/>
<rect x="202" y="345" width="1" height="20" fill="#ffffff"/>
<rect x="155" y="344" width="47" height="1" fill="#666666"/>
<rect x="155" y="363" width="47" height="1" fill="#666666"/>
<rect x="155" y="344" width="1" height="20" fill="#666666"/>
<rect x="201" y="344" width="1" height="20" fill="#666666"/>
<rect x="224" y="190" width="399" height="170" fill="#ffffff"/>
<rect x="223" y="189" width="401" height="1" fill="#666666"/>
<rect x="223" y="189" width="1" height="187" fill="#666666"/>
<rect x="224" y="190" width="399" height="1" fill="#b0b0b0"/>
<rect x="224" y="190" width="1" height="185" fill="#b0b0b0"/>
<rect x="623" y="189" width="1" height="187" fill="#666666"/>
<rect x="624" y="190" width="1" height="187" fill="#ffffff"/>
<rect x="223" y="376" width="402" height="1" fill="#ffffff"/>
<rect x="224" y="360" width="399" height="1" fill="#666666"/>
<rect x="224" y="375" width="399" height="1" fill="#666666"/>
<rect x="225" y="361" width="397" height="14" fill="#cccccc"/>
<rect x="225" y="361" width="14" height="1" fill="#ffffff"/>
<rect x="225" y="361" width="1" height="14" fill="#ffffff"/>
<polygon points="228.5,368 233,363.5 233,372.5" fill="#000"/>
<rect x="239" y="360" width="112" height="15" fill="#666699"/>
<rect x="240" y="361" width="110" height="13" fill="#ccccff"/>
<rect x="241" y="362" width="109" height="12" fill="#9999cc"/>
<rect x="242" y="363" width="106" height="10" fill="url(#bumps)"/>
<rect x="351" y="361" width="1" height="14" fill="#999999"/>
<rect x="607" y="361" width="1" height="14" fill="#666666"/>
<rect x="608" y="361" width="15" height="1" fill="#ffffff"/>
<rect x="608" y="361" width="1" height="14" fill="#ffffff"/>
<rect x="622" y="361" width="1" height="15" fill="#666666"/>
<polygon points="614,363.5 618.5,368 614,372.5" fill="#000"/>
<rect x="223" y="378" width="403" height="1" fill="#ffffff"/>
<rect x="223" y="408" width="403" height="1" fill="#ffffff"/>
<rect x="223" y="378" width="1" height="31" fill="#ffffff"/>
<rect x="625" y="378" width="1" height="31" fill="#ffffff"/>
<rect x="222" y="377" width="403" height="1" fill="#666666"/>
<rect x="222" y="407" width="403" height="1" fill="#666666"/>
<rect x="222" y="377" width="1" height="31" fill="#666666"/>
<rect x="624" y="377" width="1" height="31" fill="#666666"/>
<rect x="303" y="382" width="320" height="1" fill="#ffffff"/>
<rect x="303" y="404" width="320" height="1" fill="#ffffff"/>
<rect x="303" y="382" width="1" height="23" fill="#ffffff"/>
<rect x="622" y="382" width="1" height="23" fill="#ffffff"/>
<rect x="302" y="381" width="320" height="1" fill="#666666"/>
<rect x="302" y="403" width="320" height="1" fill="#666666"/>
<rect x="302" y="381" width="1" height="23" fill="#666666"/>
<rect x="621" y="381" width="1" height="23" fill="#666666"/>
<polygon points="605,390 616,390 610.5,395.5" fill="#000"/>
<rect x="276" y="379" width="15" height="1" fill="#666666"/>
<rect x="290" y="379" width="1" height="3" fill="#666666"/>
<rect x="277" y="380" width="13" height="1" fill="#ffffff"/>
<path d="M272.5 385 L276.5 379.5" stroke="#666666" stroke-width="1" fill="none" shape-rendering="geometricPrecision"/>
<path d="M273.5 385 L277 380.5" stroke="#ffffff" stroke-width="1" fill="none" shape-rendering="geometricPrecision"/>
<rect x="272" y="385" width="1" height="9" fill="#666666"/>
<rect x="273" y="385" width="1" height="8" fill="#ffffff"/>
<polygon points="277.5,385 287.5,385 282.5,390.5" fill="#000"/>
<rect x="273" y="394" width="17" height="11" fill="#aaaaaa"/>
<polygon points="272,393 277,393 272,398" fill="#cccccc"/>
<rect x="276" y="393" width="17" height="1" fill="#222222"/>
<path d="M272.5 398 L277 393.5" stroke="#666666" stroke-width="1" fill="none" shape-rendering="geometricPrecision"/>
<rect x="272" y="398" width="1" height="8" fill="#666666"/>
<rect x="272" y="405" width="19" height="1" fill="#666666"/>
<rect x="290" y="394" width="1" height="12" fill="#666666"/>
<rect x="291" y="394" width="1" height="13" fill="#ffffff"/>
<rect x="272" y="406" width="20" height="1" fill="#ffffff"/>
<rect x="281" y="398" width="3" height="3" fill="#000"/>
<rect x="279" y="399" width="7" height="1" fill="#000"/>
<rect x="282" y="396" width="1" height="7" fill="#000"/>
<rect x="280" y="397" width="1" height="1" fill="#222"/>
<rect x="284" y="397" width="1" height="1" fill="#222"/>
<rect x="280" y="401" width="1" height="1" fill="#222"/>
<rect x="284" y="401" width="1" height="1" fill="#222"/>
<rect x="2" y="410" width="629" height="1" fill="#666666"/>
<rect x="2" y="410" width="1" height="20" fill="#666666"/>
<rect x="3" y="411" width="628" height="1" fill="#ffffff"/>
<rect x="3" y="411" width="1" height="19" fill="#ffffff"/>
<rect x="630" y="410" width="1" height="20" fill="#999999"/>
<rect x="538" y="414" width="90" height="16" fill="#000"/>
<rect x="540" y="416" width="87" height="14" fill="#ffffff"/>
</svg>
<div class="t" style="left:259.90px;top:0px;font-weight:bold;-webkit-text-stroke:0.3px currentColor;font-size:13px;color:#fff;text-shadow:1px 1px 1px #10284a;transform:scaleX(1.1683);transform-origin:0px 0;">Calculator</div>
<div class="t" style="left:7.80px;top:22px;font-weight:bold;-webkit-text-stroke:0.3px currentColor;letter-spacing:0.920px;">Window</div>
<div class="t" style="left:71.20px;top:22px;font-weight:bold;-webkit-text-stroke:0.3px currentColor;letter-spacing:0.825px;">Tools</div>
<div class="t" style="left:117.00px;top:22px;font-weight:bold;-webkit-text-stroke:0.3px currentColor;letter-spacing:0.857px;">Memories</div>
<div class="t" style="left:191.60px;top:22px;font-weight:bold;-webkit-text-stroke:0.3px currentColor;letter-spacing:0.700px;">Const</div>
<div class="t" style="left:240.50px;top:22px;font-weight:bold;-webkit-text-stroke:0.3px currentColor;letter-spacing:0.767px;">Options</div>
<div class="t" style="left:302.50px;top:22px;font-weight:bold;-webkit-text-stroke:0.3px currentColor;letter-spacing:1.033px;">Help</div>
<div class="t" style="left:6.70px;top:42px;font-weight:bold;-webkit-text-stroke:0.3px currentColor;letter-spacing:0.560px;"><span style="margin:0 1.98px 0 0.99px;font-weight:normal;font-size:13px;line-height:0;position:relative;top:0.5px;-webkit-text-stroke:0">/</span>home<span style="margin:0 1.98px 0 0.99px;font-weight:normal;font-size:13px;line-height:0;position:relative;top:0.5px;-webkit-text-stroke:0">/</span>simulation<span style="margin:0 1.98px 0 0.99px;font-weight:normal;font-size:13px;line-height:0;position:relative;top:0.5px;-webkit-text-stroke:0">/</span>gmid<span style="margin:0 1.98px 0 0.99px;font-weight:normal;font-size:13px;line-height:0;position:relative;top:0.5px;-webkit-text-stroke:0">/</span>spectre<span style="margin:0 1.98px 0 0.99px;font-weight:normal;font-size:13px;line-height:0;position:relative;top:0.5px;-webkit-text-stroke:0">/</span>schematic<span style="margin:0 1.98px 0 0.99px;font-weight:normal;font-size:13px;line-height:0;position:relative;top:0.5px;-webkit-text-stroke:0">/</span>psf</div>
<div class="t" style="left:15.00px;top:66px;font-style:italic;letter-spacing:0.312px;">Selection choices</div>
<div class="t" style="left:42.40px;top:90px;font-weight:bold;-webkit-text-stroke:0.3px currentColor;letter-spacing:0.521px;">clip graph selection</div>
<div class="t" style="left:22.70px;top:118px;font-weight:bold;-webkit-text-stroke:0.3px currentColor;letter-spacing:0.900px;">off</div>
<div class="t" style="left:75.40px;top:118px;font-weight:bold;-webkit-text-stroke:0.3px currentColor;letter-spacing:0.660px;">family</div>
<div class="t" style="left:149.20px;top:118px;font-weight:bold;-webkit-text-stroke:0.3px currentColor;letter-spacing:0.933px;">wave</div>
<div class="t" style="left:215.10px;top:119px;font-weight:bold;-webkit-text-stroke:0.3px currentColor;transform:scaleX(1.1600);transform-origin:0px 0;">vt</div>
<div class="t" style="left:252.30px;top:119px;font-weight:bold;-webkit-text-stroke:0.3px currentColor;transform:scaleX(1.2000);transform-origin:1px 0;letter-spacing:1.083px;">it</div>
<div class="t" style="left:219.60px;top:95px;font-style:italic;letter-spacing:1.500px;">tran</div>
<div class="t" style="left:265.10px;top:95px;font-style:italic;transform:scaleX(1.0167);transform-origin:0px 0;">ac</div>
<div class="t" style="left:298.80px;top:95px;font-style:italic;transform:scaleX(1.0500);transform-origin:0px 0;">dc</div>
<div class="t" style="left:332.20px;top:95px;font-style:italic;letter-spacing:0.529px;">swept_dc</div>
<div class="t" style="left:408.40px;top:95px;font-style:italic;letter-spacing:1.133px;">info</div>
<div class="t" style="left:449.20px;top:95px;font-style:italic;letter-spacing:1.100px;">noise</div>
<div class="t" style="left:500.70px;top:95px;font-style:italic;font-size:13px;letter-spacing:-0.3px;transform:scaleX(1.15);transform-origin:0 0;">rf</div>
<div class="a" style="left:8px;top:155px;width:596px;height:20px;overflow:hidden"><div class="t" style="left:1.70px;top:4px;font-weight:bold;-webkit-text-stroke:0.3px currentColor;letter-spacing:0.519px;">getData("NM0:gmoverid"</div></div>
<div class="a" style="left:8px;top:155px;width:596px;height:20px;overflow:hidden"><div class="t" style="left:158.00px;top:4px;font-weight:bold;-webkit-text-stroke:0.3px currentColor;letter-spacing:0.290px;">?resultsDir</div></div>
<div class="a" style="left:8px;top:155px;width:596px;height:20px;overflow:hidden"><div class="t" style="left:228.50px;top:4px;font-weight:bold;-webkit-text-stroke:0.3px currentColor;letter-spacing:0.634px;">"<span style="margin:0 1.80px 0 -0.20px;font-weight:normal;font-size:13px;line-height:0;position:relative;top:0.5px;-webkit-text-stroke:0">/</span>home<span style="margin:0 1.80px 0 0.90px;font-weight:normal;font-size:13px;line-height:0;position:relative;top:0.5px;-webkit-text-stroke:0">/</span>simulation<span style="margin:0 1.80px 0 0.90px;font-weight:normal;font-size:13px;line-height:0;position:relative;top:0.5px;-webkit-text-stroke:0">/</span>gmid<span style="margin:0 1.80px 0 0.90px;font-weight:normal;font-size:13px;line-height:0;position:relative;top:0.5px;-webkit-text-stroke:0">/</span>spectre<span style="margin:0 1.80px 0 0.90px;font-weight:normal;font-size:13px;line-height:0;position:relative;top:0.5px;-webkit-text-stroke:0">/</span>schematic<span style="margin:0 1.80px 0 0.90px;font-weight:normal;font-size:13px;line-height:0;position:relative;top:0.5px;-webkit-text-stroke:0">/</span>"</div></div>
<div class="a" style="left:8px;top:155px;width:596px;height:20px;overflow:hidden"><div class="t" style="left:527.30px;top:4px;font-weight:bold;-webkit-text-stroke:0.3px currentColor;letter-spacing:0.583px;">?result</div></div>
<div class="a" style="left:8px;top:155px;width:596px;height:20px;overflow:hidden"><div class="t" style="left:573.20px;top:4px;font-weight:bold;-webkit-text-stroke:0.3px currentColor;letter-spacing:0.7px;">"dc-4"</div></div>
<div class="t" style="left:18.50px;top:196px;font-weight:bold;-webkit-text-stroke:0.3px currentColor;letter-spacing:0.820px;">Append</div>
<div class="t" style="left:24.70px;top:222px;font-weight:bold;-webkit-text-stroke:0.3px currentColor;letter-spacing:0.525px;">Clear</div>
<div class="t" style="left:89.60px;top:222px;font-weight:bold;-webkit-text-stroke:0.3px currentColor;letter-spacing:1.167px;">Undo</div>
<div class="t" style="left:159.70px;top:222px;font-weight:bold;-webkit-text-stroke:0.3px currentColor;letter-spacing:0.600px;">Eval</div>
<div class="t" style="left:20.80px;top:252px;font-weight:bold;-webkit-text-stroke:0.3px currentColor;transform:scaleX(1.2000);transform-origin:1px 0;letter-spacing:1.500px;">1<span style="margin:0 0.27px 0 0.14px;font-weight:normal;font-size:13px;line-height:0;position:relative;top:0.5px;-webkit-text-stroke:0">/</span>x</div>
<div class="t" style="left:72.00px;top:252px;font-weight:bold;-webkit-text-stroke:0.3px currentColor;letter-spacing:0.350px;">eex</div>
<div class="t" style="left:117.20px;top:252px;font-weight:bold;-webkit-text-stroke:0.3px currentColor;letter-spacing:1.100px;">Clst</div>
<div class="t" style="left:162.40px;top:252px;font-weight:bold;-webkit-text-stroke:0.3px currentColor;letter-spacing:0.600px;">Enter</div>
<div class="t" style="left:28.25px;top:276px;font-weight:bold;-webkit-text-stroke:0.3px currentColor;transform:scaleX(1.2000);transform-origin:0px 0;">+</div>
<div class="t" style="left:77.75px;top:276px;font-weight:bold;-webkit-text-stroke:0.3px currentColor;transform:scaleX(1.2000);transform-origin:0px 0;">7</div>
<div class="t" style="left:126.50px;top:276px;font-weight:bold;-webkit-text-stroke:0.3px currentColor;transform:scaleX(1.1667);transform-origin:0px 0;">8</div>
<div class="t" style="left:175.70px;top:276px;font-weight:bold;-webkit-text-stroke:0.3px currentColor;transform:scaleX(1.1833);transform-origin:0px 0;">9</div>
<div class="t" style="left:28.90px;top:300px;font-weight:bold;-webkit-text-stroke:0.3px currentColor;">-</div>
<div class="t" style="left:76.70px;top:300px;font-weight:bold;-webkit-text-stroke:0.3px currentColor;transform:scaleX(1.2000);transform-origin:0px 0;">4</div>
<div class="t" style="left:126.50px;top:300px;font-weight:bold;-webkit-text-stroke:0.3px currentColor;transform:scaleX(1.1667);transform-origin:0px 0;">5</div>
<div class="t" style="left:176.25px;top:300px;font-weight:bold;-webkit-text-stroke:0.3px currentColor;transform:scaleX(1.2000);transform-origin:0px 0;">6</div>
<div class="t" style="left:29.00px;top:324px;font-weight:bold;-webkit-text-stroke:0.3px currentColor;transform:scaleX(1.2000);transform-origin:0px 0;">x</div>
<div class="t" style="left:76.30px;top:324px;font-weight:bold;-webkit-text-stroke:0.3px currentColor;transform:scaleX(1.2000);transform-origin:1px 0;">1</div>
<div class="t" style="left:126.50px;top:324px;font-weight:bold;-webkit-text-stroke:0.3px currentColor;transform:scaleX(1.1667);transform-origin:0px 0;">2</div>
<div class="t" style="left:176.25px;top:324px;font-weight:bold;-webkit-text-stroke:0.3px currentColor;transform:scaleX(1.2000);transform-origin:0px 0;">3</div>
<div class="t" style="left:29.50px;top:348px;font-weight:bold;-webkit-text-stroke:0.3px currentColor;">/</div>
<div class="t" style="left:77.75px;top:348px;font-weight:bold;-webkit-text-stroke:0.3px currentColor;transform:scaleX(1.2000);transform-origin:0px 0;">0</div>
<div class="t" style="left:127.00px;top:348px;font-weight:bold;-webkit-text-stroke:0.3px currentColor;">.</div>
<div class="t" style="left:167.40px;top:348px;font-weight:bold;-webkit-text-stroke:0.3px currentColor;transform:scaleX(1.2000);transform-origin:0px 0;letter-spacing:2.500px;">+<span style="margin:0 0.27px 0 0.14px;font-weight:normal;font-size:13px;line-height:0;position:relative;top:0.5px;-webkit-text-stroke:0">/</span>-</div>
<div class="a" style="left:225px;top:191px;width:397px;height:169px;overflow:hidden"><div class="t" style="left:0.50px;top:0px;letter-spacing:2.250px;">1<span style="margin:0 0.36px 0 0.18px;font-weight:normal;font-size:13px;line-height:0;position:relative;top:0.5px;-webkit-text-stroke:0">/</span>x</div></div>
<div class="a" style="left:225px;top:191px;width:397px;height:169px;overflow:hidden"><div class="t" style="left:0.50px;top:15px;letter-spacing:0.55px;">10**x</div></div>
<div class="a" style="left:225px;top:191px;width:397px;height:169px;overflow:hidden"><div class="t" style="left:0.50px;top:30px;letter-spacing:0.55px;">Rn</div></div>
<div class="a" style="left:225px;top:191px;width:397px;height:169px;overflow:hidden"><div class="t" style="left:0.50px;top:45px;letter-spacing:0.55px;">abs</div></div>
<div class="a" style="left:225px;top:191px;width:397px;height:169px;overflow:hidden"><div class="t" style="left:0.50px;top:60px;letter-spacing:0.55px;">acos</div></div>
<div class="a" style="left:225px;top:191px;width:397px;height:169px;overflow:hidden"><div class="t" style="left:0.50px;top:75px;letter-spacing:0.55px;">acosh</div></div>
<div class="a" style="left:225px;top:191px;width:397px;height:169px;overflow:hidden"><div class="t" style="left:0.50px;top:90px;letter-spacing:0.55px;">asin</div></div>
<div class="a" style="left:225px;top:191px;width:397px;height:169px;overflow:hidden"><div class="t" style="left:0.50px;top:105px;letter-spacing:0.55px;">asinh</div></div>
<div class="a" style="left:225px;top:191px;width:397px;height:169px;overflow:hidden"><div class="t" style="left:0.50px;top:120px;letter-spacing:0.55px;">atan</div></div>
<div class="a" style="left:225px;top:191px;width:397px;height:169px;overflow:hidden"><div class="t" style="left:0.50px;top:135px;letter-spacing:0.55px;">atanh</div></div>
<div class="a" style="left:225px;top:191px;width:397px;height:169px;overflow:hidden"><div class="t" style="left:0.50px;top:150px;letter-spacing:0.467px;">average</div></div>
<div class="a" style="left:225px;top:191px;width:397px;height:169px;overflow:hidden"><div class="t" style="left:131.00px;top:0px;letter-spacing:0.55px;">b1f</div></div>
<div class="a" style="left:225px;top:191px;width:397px;height:169px;overflow:hidden"><div class="t" style="left:131.00px;top:15px;letter-spacing:0.913px;">bandwidth</div></div>
<div class="a" style="left:225px;top:191px;width:397px;height:169px;overflow:hidden"><div class="t" style="left:131.00px;top:30px;letter-spacing:0.55px;">clip</div></div>
<div class="a" style="left:225px;top:191px;width:397px;height:169px;overflow:hidden"><div class="t" style="left:131.00px;top:45px;letter-spacing:0.620px;">compression</div></div>
<div class="a" style="left:225px;top:191px;width:397px;height:169px;overflow:hidden"><div class="t" style="left:131.00px;top:60px;letter-spacing:0.454px;">compressionVRI</div></div>
<div class="a" style="left:225px;top:191px;width:397px;height:169px;overflow:hidden"><div class="t" style="left:131.00px;top:75px;letter-spacing:0.343px;">convolve</div></div>
<div class="a" style="left:225px;top:191px;width:397px;height:169px;overflow:hidden"><div class="t" style="left:131.00px;top:90px;letter-spacing:0.55px;">cos</div></div>
<div class="a" style="left:225px;top:191px;width:397px;height:169px;overflow:hidden"><div class="t" style="left:131.00px;top:105px;letter-spacing:0.55px;">cosh</div></div>
<div class="a" style="left:225px;top:191px;width:397px;height:169px;overflow:hidden"><div class="t" style="left:131.00px;top:120px;letter-spacing:0.55px;">cross</div></div>
<div class="a" style="left:225px;top:191px;width:397px;height:169px;overflow:hidden"><div class="t" style="left:131.00px;top:135px;letter-spacing:0.55px;">dB10</div></div>
<div class="a" style="left:225px;top:191px;width:397px;height:169px;overflow:hidden"><div class="t" style="left:131.00px;top:150px;letter-spacing:0.55px;">dB20</div></div>
<div class="a" style="left:225px;top:191px;width:397px;height:169px;overflow:hidden"><div class="t" style="left:261.80px;top:0px;letter-spacing:0.55px;">dBm</div></div>
<div class="a" style="left:225px;top:191px;width:397px;height:169px;overflow:hidden"><div class="t" style="left:261.80px;top:15px;letter-spacing:0.55px;">delay</div></div>
<div class="a" style="left:225px;top:191px;width:397px;height:169px;overflow:hidden"><div class="t" style="left:261.80px;top:30px;letter-spacing:0.55px;">deriv</div></div>
<div class="a" style="left:225px;top:191px;width:397px;height:169px;overflow:hidden"><div class="t" style="left:261.80px;top:45px;letter-spacing:0.55px;">dft</div></div>
<div class="a" style="left:225px;top:191px;width:397px;height:169px;overflow:hidden"><div class="t" style="left:261.80px;top:60px;letter-spacing:0.55px;">dftbb</div></div>
<div class="a" style="left:225px;top:191px;width:397px;height:169px;overflow:hidden"><div class="t" style="left:261.80px;top:75px;letter-spacing:0.440px;">evmQAM</div></div>
<div class="a" style="left:225px;top:191px;width:397px;height:169px;overflow:hidden"><div class="t" style="left:261.80px;top:90px;letter-spacing:0.55px;">evmQpsk</div></div>
<div class="a" style="left:225px;top:191px;width:397px;height:169px;overflow:hidden"><div class="t" style="left:261.80px;top:105px;letter-spacing:0.55px;">exp</div></div>
<div class="a" style="left:225px;top:191px;width:397px;height:169px;overflow:hidden"><div class="t" style="left:261.80px;top:120px;letter-spacing:0.222px;">eyeDiagram</div></div>
<div class="a" style="left:225px;top:191px;width:397px;height:169px;overflow:hidden"><div class="t" style="left:262.80px;top:135px;letter-spacing:0.55px;">flip</div></div>
<div class="a" style="left:225px;top:191px;width:397px;height:169px;overflow:hidden"><div class="t" style="left:262.80px;top:150px;letter-spacing:0.55px;">fourEval</div></div>
<div class="a" style="left:225px;top:191px;width:397px;height:169px;overflow:hidden"><div class="t" style="left:393.60px;top:0px;letter-spacing:0.55px;">f</div></div>
<div class="a" style="left:225px;top:191px;width:397px;height:169px;overflow:hidden"><div class="t" style="left:393.60px;top:15px;letter-spacing:0.55px;">f</div></div>
<div class="a" style="left:225px;top:191px;width:397px;height:169px;overflow:hidden"><div class="t" style="left:392.60px;top:30px;letter-spacing:0.55px;">g</div></div>
<div class="a" style="left:225px;top:191px;width:397px;height:169px;overflow:hidden"><div class="t" style="left:392.60px;top:45px;letter-spacing:0.55px;">g</div></div>
<div class="a" style="left:225px;top:191px;width:397px;height:169px;overflow:hidden"><div class="t" style="left:392.60px;top:60px;letter-spacing:0.55px;">g</div></div>
<div class="a" style="left:225px;top:191px;width:397px;height:169px;overflow:hidden"><div class="t" style="left:392.60px;top:75px;letter-spacing:0.55px;">g</div></div>
<div class="a" style="left:225px;top:191px;width:397px;height:169px;overflow:hidden"><div class="t" style="left:392.60px;top:90px;letter-spacing:0.55px;">g</div></div>
<div class="a" style="left:225px;top:191px;width:397px;height:169px;overflow:hidden"><div class="t" style="left:392.60px;top:105px;letter-spacing:0.55px;">g</div></div>
<div class="a" style="left:225px;top:191px;width:397px;height:169px;overflow:hidden"><div class="t" style="left:392.60px;top:120px;letter-spacing:0.55px;">g</div></div>
<div class="a" style="left:225px;top:191px;width:397px;height:169px;overflow:hidden"><div class="t" style="left:392.60px;top:135px;letter-spacing:0.55px;">g</div></div>
<div class="a" style="left:225px;top:191px;width:397px;height:169px;overflow:hidden"><div class="t" style="left:392.60px;top:150px;letter-spacing:0.55px;">g</div></div>
<div class="t" style="left:228.70px;top:386px;font-weight:bold;-webkit-text-stroke:0.3px currentColor;color:#5c5c9c;letter-spacing:0.540px;">Filter</div>
<div class="t" style="left:307.30px;top:386px;font-weight:bold;-webkit-text-stroke:0.3px currentColor;letter-spacing:1.000px;">All</div>
<div class="t" style="left:6.80px;top:418px;">&gt;</div>
<div class="a" style="left:540px;top:416px;width:87px;height:14px;overflow:hidden"><div class="t b" style="left:3.5px;top:-3px;font-size:20px;line-height:20px;letter-spacing:4.2px;-webkit-text-stroke:0.7px #000;transform:scaleX(0.76);transform-origin:0 0">cadence</div></div>
<div class="a" style="left:555px;top:415px;width:7px;height:2px;background:#dd2222"></div>
</body></html>
